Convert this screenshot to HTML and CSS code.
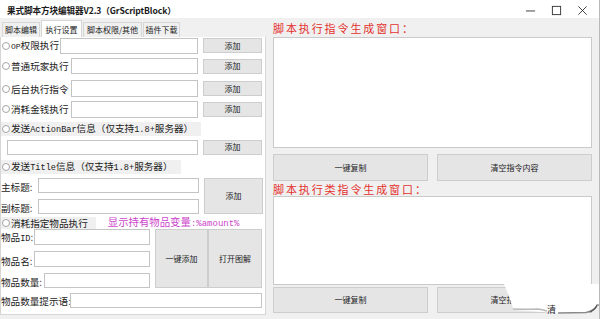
FILE: index.html
```html
<!DOCTYPE html>
<html lang="zh">
<head>
<meta charset="utf-8">
<title>果式脚本方块编辑器</title>
<link rel="stylesheet" href="styles.css">
</head>
<body>
<div class="window">
  <div class="titlebar">
    <div class="title">果式脚本方块编辑器V2.3（GrScriptBlock）</div>
    <div class="controls">
      <svg class="ctl" width="12" height="12" viewBox="0 0 12 12"><path d="M1 6.5h10" stroke="#333" stroke-width="1"/></svg>
      <svg class="ctl" width="12" height="12" viewBox="0 0 12 12"><rect x="1.5" y="1.5" width="9" height="9" fill="none" stroke="#333" stroke-width="1"/></svg>
      <svg class="ctl" width="12" height="12" viewBox="0 0 12 12"><path d="M1.5 1.5l9 9M10.5 1.5l-9 9" stroke="#333" stroke-width="1"/></svg>
    </div>
  </div>
  <div class="main">
    <div class="left">
      <div class="tabs">
        <div class="tab t1">脚本编辑</div>
        <div class="tab t2 active">执行设置</div>
        <div class="tab t3">脚本权限/其他</div>
        <div class="tab t4">插件下载</div>
      </div>
      <div class="panel">
        <div class="row r1">
          <label class="lbl w60"><span class="radio"></span><span class="mono sm">OP</span>权限执行</label>
          <input class="inp" type="text">
          <button class="btn add">添加</button>
        </div>
        <div class="row r2">
          <label class="lbl w71"><span class="radio"></span>普通玩家执行</label>
          <input class="inp" type="text">
          <button class="btn add">添加</button>
        </div>
        <div class="row r3">
          <label class="lbl w71"><span class="radio"></span>后台执行指令</label>
          <input class="inp" type="text">
          <button class="btn add">添加</button>
        </div>
        <div class="row r4">
          <label class="lbl w71"><span class="radio"></span>消耗金钱执行</label>
          <input class="inp" type="text">
          <button class="btn add">添加</button>
        </div>
        <div class="optrow r5">
          <label class="lbl gray"><span class="radio"></span>发送<span class="mono">ActionBar</span>信息（仅支持<span class="mono">1.8+</span>服务器）</label>
        </div>
        <div class="row r6">
          <input class="inp first" type="text">
          <button class="btn add">添加</button>
        </div>
        <div class="optrow r7">
          <label class="lbl gray"><span class="radio"></span>发送<span class="mono">Title</span>信息（仅支持<span class="mono">1.8+</span>服务器）</label>
        </div>
        <div class="titleblock">
          <label class="lbl plain l-main">主标题:</label>
          <input class="inp i-main" type="text">
          <label class="lbl plain l-sub">副标题:</label>
          <input class="inp i-sub" type="text">
          <button class="btn b-title">添加</button>
        </div>
        <div class="optrow r9">
          <label class="lbl gray"><span class="radio"></span>消耗指定物品执行</label>
          <span class="hint">显示持有物品变量<span class="mono">:%amount%</span></span>
        </div>
        <div class="itemblock">
          <label class="lbl plain l-id">物品<span class="mono">ID</span>:</label>
          <input class="inp i-id" type="text">
          <label class="lbl plain l-name">物品名:</label>
          <input class="inp i-name" type="text">
          <label class="lbl plain l-num">物品数量:</label>
          <input class="inp i-num" type="text">
          <button class="btn b-add">一键添加</button>
          <button class="btn b-open">打开图解</button>
        </div>
        <div class="row r11">
          <label class="lbl plain w70">物品数量提示语:</label>
          <input class="inp" type="text">
        </div>
      </div>
    </div>
    <div class="right">
      <div class="redlbl rl1">脚本执行指令生成窗口：</div>
      <textarea class="ta ta1"></textarea>
      <div class="btnrow br1">
        <button class="btn wide">一键复制</button>
        <button class="btn wide">清空指令内容</button>
      </div>
      <div class="redlbl rl2">脚本执行类指令生成窗口：</div>
      <textarea class="ta ta2"></textarea>
      <div class="btnrow br2">
        <button class="btn wide">一键复制</button>
        <button class="btn wide">清空指令内容</button>
      </div>
    </div>
  </div>
  <svg class="curl" width="100" height="41" viewBox="0 0 100 41">
    <path d="M4 6 L100 6 L100 27 L96 30 Q92 34 84 35 L60 35.5 L30 33 L14 32 Q11 26 9 18 Z" fill="#fff"/>
    <path d="M13 31 Q25 31.5 38 31 Q44 32 47 33" stroke="#b8b8b8" stroke-width="1.6" fill="none"/>
    <path d="M58 35 L86 34.5 Q93 33 97 28" stroke="#8a8a8a" stroke-width="1.4" fill="none"/>
    <path d="M90 34 Q95 32 97 27 L99 27" stroke="#555" stroke-width="1.2" fill="none"/>
    <text x="47" y="35" class="curltext">清</text>
  </svg>
</div>
</body>
</html>
```

FILE: styles.css
```css
* { box-sizing: border-box; }
html, body { margin: 0; padding: 0; background: #fff; }
body { font-family: "Noto Sans CJK SC", "Liberation Sans", sans-serif; color: #1a1a1a; }

.window {
  position: relative;
  width: 600px;
  height: 319px;
  background: #f0f0f0;
  overflow: hidden;
  border-right: 1px solid #b9b9b9;
}

.titlebar {
  height: 18px;
  background: #fff;
  display: flex;
  align-items: center;
  padding-left: 7px;
}
.title { font-size: 8.6px; font-weight: 700; line-height: 1; letter-spacing: -0.1px; padding-top: 2px; }
.controls { margin-left: auto; display: flex; gap: 15px; padding-right: 11px; padding-top: 3px; }
.ctl { display: block; width: 11px; height: 11px; }

.main { display: flex; height: 301px; }
.left { width: 266px; display: flex; flex-direction: column; }

.tabs {
  height: 19px;
  display: flex;
  align-items: flex-end;
  padding-left: 2px;
  gap: 1px;
}
.tab {
  height: 15px;
  border: 1px solid #d6d6d6;
  border-bottom: none;
  background: #f0f0f0;
  font-size: 8px;
  line-height: 14px;
  text-align: center;
  color: #222;
}
.tab.t1 { width: 38px; }
.tab.t2 { width: 41px; }
.tab.t3 { width: 59px; }
.tab.t4 { width: 37px; }
.tab.active { background: #fff; height: 17px; line-height: 17px; }

.panel {
  height: 278px;
  background: #fff;
  border: 1px solid #d6d6d6;
  border-top: none;
  padding-right: 3px;
  display: flex;
  flex-direction: column;
}

.lbl {
  font-size: 9.6px;
  line-height: 12px;
  white-space: nowrap;
  display: flex;
  align-items: baseline;
  flex-shrink: 0;
}
.lbl.gray { background: #f0f0f0; padding-right: 8px; }
.mono { font-family: "Liberation Mono", monospace; font-size: 8.6px; }
.mono.sm { font-size: 8px; }
.radio {
  width: 8px;
  height: 8px;
  border: 1px solid #a5a5a5;
  border-radius: 50%;
  background: #fff;
  margin: 0 1px 0 1px;
  flex-shrink: 0;
  align-self: center;
}
.w60 { width: 59px; }
.w71 { width: 70px; }
.w70 { width: 69px; }

.inp {
  height: 16px;
  border: 1px solid #c4c4c4;
  background: #fff;
  padding: 0;
  margin: 0;
  font: inherit;
  outline: none;
}
.row .inp { flex: 1; min-width: 0; }
.row .inp.first { margin-left: 6px; }

.btn {
  background: #e5e5e5;
  border: 1px solid #cdcdcd;
  font-family: "Noto Sans CJK SC", sans-serif;
  font-size: 8px;
  color: #222;
  padding: 0;
  margin: 0;
  line-height: 1;
}
.btn.add { width: 59px; height: 15px; margin-left: 5px; }

.row { display: flex; align-items: center; }
.r1 { height: 17px; margin-top: 0; }
.r2 { height: 16px; margin-top: 4px; }
.r3 { height: 17px; margin-top: 6px; }
.r3 .inp, .r4 .inp { height: 17px; }
.r4 { height: 18px; margin-top: 3px; }
.optrow { display: flex; align-items: center; }
.r5 { height: 12px; margin-top: 5px; }
.r6 { height: 16px; margin-top: 4px; }
.r6 .inp { height: 15px; }
.r7 { height: 12px; margin-top: 6px; }

.titleblock {
  margin-top: 5px;
  display: grid;
  grid-template-columns: 37px 161px 64px;
  grid-template-rows: 15px 15px;
  row-gap: 6px;
  height: 36px;
}
.l-main { grid-row: 1; grid-column: 1; align-self: end; }
.i-main { grid-row: 1; grid-column: 2; height: 15px; }
.l-sub { grid-row: 2; grid-column: 1; align-self: end; }
.i-sub { grid-row: 2; grid-column: 2; height: 15px; }
.b-title { grid-row: 1 / 3; grid-column: 3; height: 36px; width: 59px; margin-left: 5px; }

.r9 { height: 12px; margin-top: 3px; }
.hint { font-size: 10.4px; color: #cc44cc; margin-left: 12px; white-space: nowrap; line-height: 12px; }
.hint .mono { font-size: 9px; }

.itemblock {
  margin-top: 0;
  display: grid;
  grid-template-columns: 37px 5px 107px 5px 53px 54px;
  grid-template-rows: 16px 16px 15px;
  row-gap: 6px;
  height: 59px;
}
.l-id { grid-row: 1; grid-column: 1 / 3; align-self: end; }
.i-id { grid-row: 1; grid-column: 2 / 4; margin-left: -4px; height: 16px; }
.l-name { grid-row: 2; grid-column: 1 / 3; align-self: end; }
.i-name { grid-row: 2; grid-column: 2 / 4; margin-left: -4px; height: 16px; }
.l-num { grid-row: 3; grid-column: 1 / 3; align-self: end; }
.i-num { grid-row: 3; grid-column: 3; margin-left: 1px; height: 15px; }
.b-add { grid-row: 1 / 4; grid-column: 5; }
.b-open { grid-row: 1 / 4; grid-column: 6; }

.r11 { height: 15px; margin-top: 5px; }
.r11 .inp { height: 15px; }

.right {
  width: 319px;
  margin-left: 7px;
  display: flex;
  flex-direction: column;
}
.redlbl {
  font-size: 11px;
  color: #e4302c;
  letter-spacing: 1.9px;
  white-space: nowrap;
  line-height: 14px;
}
.rl1 { height: 19px; padding-top: 3px; }
.ta {
  display: block;
  width: 319px;
  border: 1px solid #cacaca;
  background: #fff;
  resize: none;
  margin: 0;
  padding: 0;
  outline: none;
}
.ta1 { height: 111px; }
.btnrow { display: flex; justify-content: space-between; }
.btn.wide { width: 155px; height: 100%; }
.br1 { height: 27px; margin-top: 6px; }
.rl2 { height: 15px; padding-top: 1px; }
.ta2 { height: 89px; }
.br2 { height: 26px; margin-top: 2px; }

.curl { position: absolute; left: 500px; top: 278px; }
.curltext { font-family: "Noto Sans CJK SC", sans-serif; font-size: 9px; fill: #222; }
```
